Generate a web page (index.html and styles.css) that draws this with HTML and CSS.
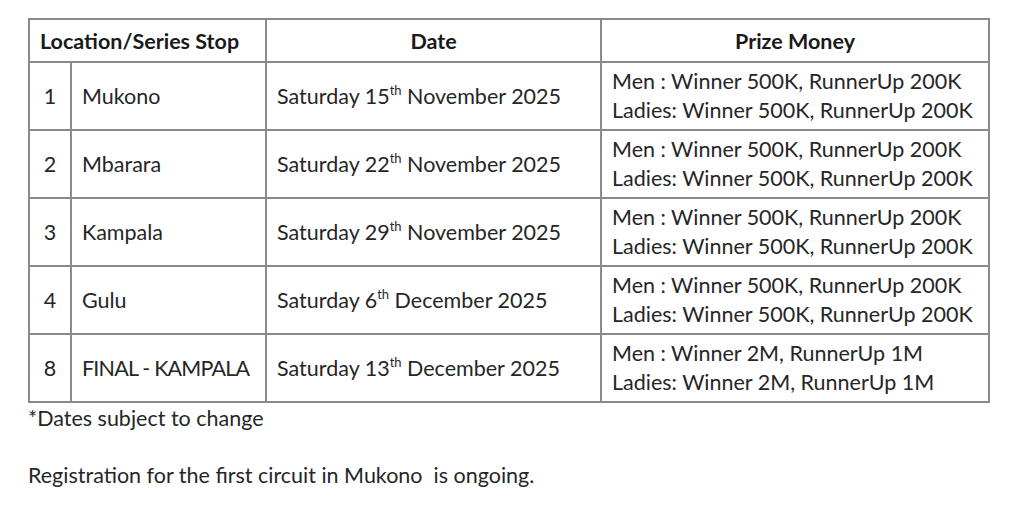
FILE: index.html
```html
<!DOCTYPE html>
<html>
<head>
<meta charset="utf-8">
<link rel="stylesheet" href="styles.css">
</head>
<body>
<div class="page">
  <table class="schedule">
    <colgroup>
      <col class="c-num"><col class="c-loc"><col class="c-date"><col class="c-prize">
    </colgroup>
    <thead>
      <tr class="head">
        <th colspan="2" class="h-left">Location/Series Stop</th>
        <th>Date</th>
        <th>Prize Money</th>
      </tr>
    </thead>
    <tbody>
      <tr>
        <td class="num">1</td><td class="loc">Mukono</td>
        <td class="date">Saturday 15<sup>th</sup> November 2025</td>
        <td class="prize">Men : Winner 500K, RunnerUp 200K<br>Ladies: Winner 500K, RunnerUp 200K</td>
      </tr>
      <tr>
        <td class="num">2</td><td class="loc">Mbarara</td>
        <td class="date">Saturday 22<sup>th</sup> November 2025</td>
        <td class="prize">Men : Winner 500K, RunnerUp 200K<br>Ladies: Winner 500K, RunnerUp 200K</td>
      </tr>
      <tr>
        <td class="num">3</td><td class="loc">Kampala</td>
        <td class="date">Saturday 29<sup>th</sup> November 2025</td>
        <td class="prize">Men : Winner 500K, RunnerUp 200K<br>Ladies: Winner 500K, RunnerUp 200K</td>
      </tr>
      <tr>
        <td class="num">4</td><td class="loc">Gulu</td>
        <td class="date">Saturday 6<sup>th</sup> December 2025</td>
        <td class="prize">Men : Winner 500K, RunnerUp 200K<br>Ladies: Winner 500K, RunnerUp 200K</td>
      </tr>
      <tr>
        <td class="num">8</td><td class="loc caps">FINAL - KAMPALA</td>
        <td class="date">Saturday 13<sup>th</sup> December 2025</td>
        <td class="prize">Men : Winner 2M, RunnerUp 1M<br>Ladies: Winner 2M, RunnerUp 1M</td>
      </tr>
    </tbody>
  </table>
  <p class="note">*Dates subject to change</p>
  <p class="reg">Registration for the first circuit in Mukono&nbsp; is ongoing.</p>
</div>
</body>
</html>
```
FILE: styles.css
```css
html, body {
  margin: 0;
  padding: 0;
  background: #ffffff;
}
body {
  font-family: Lato, "Open Sans", sans-serif;
  color: #262626;
  font-size: 21.5px;
}
.page {
  padding: 18px 0 0 28px;
}
.schedule {
  border-collapse: collapse;
  width: 960px;
  table-layout: fixed;
}
.c-num { width: 42px; }
.c-loc { width: 195px; }
.c-date { width: 335px; }
.c-prize { width: 388px; }
.schedule th, .schedule td {
  border: 2px solid #8a8a8a;
  padding: 0 10px;
  vertical-align: middle;
  white-space: nowrap;
}
.head th {
  height: 41px;
  font-weight: 700;
  color: #1a1a1a;
  text-align: center;
}
.head th.h-left {
  text-align: left;
}
tbody tr {
  height: 68px;
}
.num {
  text-align: center;
  padding: 0;
}
.loc {
  padding-left: 11px;
}
.caps {
  letter-spacing: -0.8px;
}
.date {
  padding-left: 10px;
}
.prize {
  padding-left: 11px;
  line-height: 29px;
}
sup {
  font-size: 13px;
  vertical-align: 9px;
  line-height: 0;
}
.note {
  margin: 0;
  line-height: 30px;
}
.reg {
  margin: 27px 0 0 0;
  line-height: 30px;
}
```
